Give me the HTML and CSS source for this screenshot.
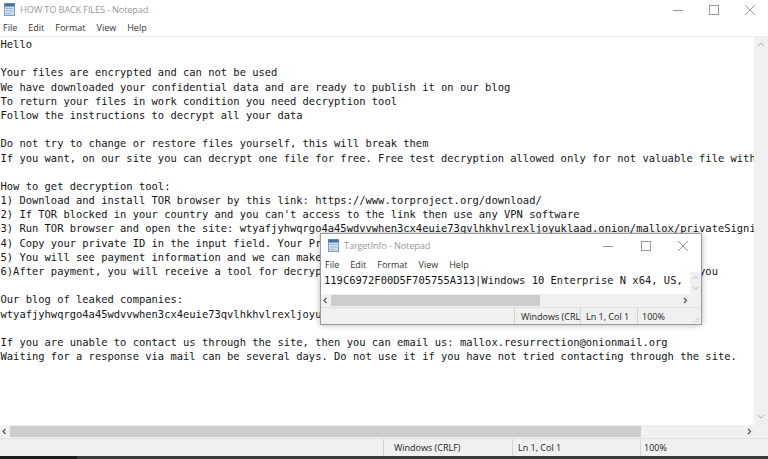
FILE: index.html
```html
<!DOCTYPE html>
<html lang="en">
<head>
  <meta charset="UTF-8" />
  <title>HOW TO BACK FILES - Notepad</title>
  <link rel="stylesheet" href="styles.css">
</head>
<body>
  <div class="desktop">
    <div class="window main">
      <div class="titlebar">
        <svg class="app-icon" width="11" height="13" viewBox="0 0 11 13">
          <rect x="0.5" y="0.5" width="10" height="12" fill="#c9def0" stroke="#7d9fc2" />
          <rect x="0.5" y="0.5" width="10" height="3" fill="#41719f" />
          <rect x="2" y="5" width="7" height="1" fill="#9cb8d4" />
          <rect x="2" y="7.5" width="7" height="1" fill="#9cb8d4" />
          <rect x="2" y="10" width="5" height="1" fill="#9cb8d4" />
        </svg>
        <span class="title">HOW TO BACK FILES - Notepad</span>
        <div class="controls">
          <svg width="36" height="20" viewBox="0 0 36 20"><path d="M13 10.5h10" stroke="#999" /></svg>
          <svg width="36" height="20" viewBox="0 0 36 20"><rect x="13.5" y="5.5" width="9" height="9" fill="none" stroke="#999" /></svg>
          <svg width="36" height="20" viewBox="0 0 36 20"><path d="M13 5l10 10M23 5L13 15" stroke="#999" /></svg>
        </div>
      </div>
      <div class="menubar">
        <span>File</span><span>Edit</span><span>Format</span><span>View</span><span>Help</span>
      </div>
      <div class="editor">
        <pre class="text">Hello

Your files are encrypted and can not be used
We have downloaded your confidential data and are ready to publish it on our blog
To return your files in work condition you need decryption tool
Follow the instructions to decrypt all your data

Do not try to change or restore files yourself, this will break them
If you want, on our site you can decrypt one file for free. Free test decryption allowed only for not valuable file with size less than 3MB

How to get decryption tool:
1) Download and install TOR browser by this link: https://www.torproject.org/download/
2) If TOR blocked in your country and you can't access to the link then use any VPN software
3) Run TOR browser and open the site: wtyafjyhwqrgo4a45wdvvwhen3cx4euie73qvlhkhvlrexljoyuklaad.onion/mallox/privateSignin
4) Copy your private ID in the input field. Your Private ID: 119C6972F00D5F705755A313
5) You will see payment information and we can make free test decryption here
6)After payment, you will receive a tool for decryption of all your files, also we will delete all leaked data you

Our blog of leaked companies:
wtyafjyhwqrgo4a45wdvvwhen3cx4euie73qvlhkhvlrexljoyuklaad.onion/mallox/

If you are unable to contact us through the site, then you can email us: mallox.resurrection@onionmail.org
Waiting for a response via mail can be several days. Do not use it if you have not tried contacting through the site.</pre>
        <div class="vscroll">
          <svg width="14" height="14" viewBox="0 0 14 14"><path d="M4 8l3-3 3 3" fill="none" stroke="#b0b0b0" /></svg>
          <svg width="14" height="14" viewBox="0 0 14 14"><path d="M4 6l3 3 3-3" fill="none" stroke="#b0b0b0" /></svg>
        </div>
      </div>
      <div class="hscroll">
        <svg class="arrow" width="10" height="13" viewBox="0 0 10 13"><path d="M5.5 4l-2.5 2.5 2.5 2.5" fill="none" stroke="#555" stroke-width="1.2" /></svg>
        <div class="track"><div class="thumb"></div></div>
        <svg class="arrow" width="10" height="13" viewBox="0 0 10 13"><path d="M4 4l2.5 2.5-2.5 2.5" fill="none" stroke="#555" stroke-width="1.2" /></svg>
        <div class="corner"></div>
      </div>
      <div class="statusbar">
        <div class="cell spacer"></div>
        <div class="cell eol">Windows (CRLF)</div>
        <div class="cell pos">Ln 1, Col 1</div>
        <div class="cell zoom">100%</div>
      </div>
    </div>
    <div class="taskbar-edge"></div>

    <div class="window small">
      <div class="titlebar">
        <svg class="app-icon" width="11" height="13" viewBox="0 0 11 13">
          <rect x="0.5" y="0.5" width="10" height="12" fill="#c9def0" stroke="#7d9fc2" />
          <rect x="0.5" y="0.5" width="10" height="3" fill="#41719f" />
          <rect x="2" y="5" width="7" height="1" fill="#9cb8d4" />
          <rect x="2" y="7.5" width="7" height="1" fill="#9cb8d4" />
          <rect x="2" y="10" width="5" height="1" fill="#9cb8d4" />
        </svg>
        <span class="title">TargetInfo - Notepad</span>
        <div class="controls">
          <svg width="37" height="23" viewBox="0 0 37 23"><path d="M13 12.5h10" stroke="#999" /></svg>
          <svg width="37" height="23" viewBox="0 0 37 23"><rect x="14.5" y="7.5" width="9" height="9" fill="none" stroke="#999" /></svg>
          <svg width="37" height="23" viewBox="0 0 37 23"><path d="M14 7l10 10M24 7L14 17" stroke="#999" /></svg>
        </div>
      </div>
      <div class="menubar">
        <span>File</span><span>Edit</span><span>Format</span><span>View</span><span>Help</span>
      </div>
      <div class="editor">
        <pre class="text">119C6972F00D5F705755A313|Windows 10 Enterprise N x64, US,</pre>
        <div class="vscroll">
          <svg width="11" height="11" viewBox="0 0 11 11"><path d="M3 6.5l2.5-2.5 2.5 2.5" fill="none" stroke="#b0b0b0" /></svg>
          <svg width="11" height="11" viewBox="0 0 11 11"><path d="M3 4.5l2.5 2.5 2.5-2.5" fill="none" stroke="#b0b0b0" /></svg>
        </div>
      </div>
      <div class="hscroll">
        <svg class="arrow" width="10" height="13" viewBox="0 0 10 13"><path d="M5.5 4l-2.5 2.5 2.5 2.5" fill="none" stroke="#555" stroke-width="1.2" /></svg>
        <div class="track"><div class="thumb"></div></div>
        <svg class="arrow" width="10" height="13" viewBox="0 0 10 13"><path d="M4 4l2.5 2.5-2.5 2.5" fill="none" stroke="#555" stroke-width="1.2" /></svg>
        <div class="corner"></div>
      </div>
      <div class="statusbar">
        <div class="cell spacer"></div>
        <div class="cell eol">Windows (CRLF)</div>
        <div class="cell pos">Ln 1, Col 1</div>
        <div class="cell zoom">100%</div>
        <svg class="grip" width="8" height="8" viewBox="0 0 8 8"><path d="M6 2h1v1h-1zM4 4h1v1h-1zM6 4h1v1h-1zM2 6h1v1h-1zM4 6h1v1h-1zM6 6h1v1h-1z" fill="#bbb" /></svg>
      </div>
    </div>
  </div>
</body>
</html>
```

FILE: styles.css
```css
body {
  margin: 0;
  padding: 0;
  background: #fff;
  font-family: "Open Sans", "Noto Sans", sans-serif;
  overflow: hidden;
}

.desktop {
  position: relative;
  width: 768px;
  height: 459px;
  overflow: hidden;
}

.window {
  display: flex;
  flex-direction: column;
  background: #fff;
}

.main {
  width: 768px;
  height: 456px;
}

/* title bar */
.titlebar {
  display: flex;
  align-items: center;
  height: 19px;
  padding-left: 4px;
  color: #9a9a9a;
  font-size: 9.3px;
  letter-spacing: -0.2px;
}

.app-icon {
  flex: none;
  margin-right: 5px;
}

.title {
  flex: 1;
  white-space: nowrap;
}

.controls {
  display: flex;
}

.controls svg {
  display: block;
}

/* menu */
.menubar {
  display: flex;
  gap: 11px;
  height: 17px;
  align-items: center;
  padding-left: 3px;
  font-size: 9px;
  color: #333;
  border-bottom: 1px solid #ececec;
}

/* editor */
.editor {
  flex: 1;
  display: flex;
  min-height: 0;
}

.text {
  flex: 1;
  margin: 0;
  padding: 0 0 0 0.5px;
  overflow: hidden;
  font-family: "DejaVu Sans Mono", "Liberation Mono", monospace;
  font-size: 10.46px;
  line-height: 14.18px;
  color: #141414;
  white-space: pre;
}

.vscroll {
  flex: none;
  width: 14px;
  background: #f0f0f0;
  display: flex;
  flex-direction: column;
  justify-content: space-between;
  padding: 1px 0 2px;
}

.vscroll svg {
  display: block;
}

/* horizontal scrollbar */
.hscroll {
  display: flex;
  height: 13px;
  background: #f0f0f0;
}

.hscroll .arrow {
  flex: none;
  display: block;
}

.hscroll .track {
  flex: 1;
  display: flex;
  align-items: center;
}

.hscroll .thumb {
  width: 86%;
  height: 11px;
  background: #cdcdcd;
}

.hscroll .corner {
  width: 14px;
  background: #f0f0f0;
}

/* status bar */
.statusbar {
  display: flex;
  height: 17px;
  background: #f0f0f0;
  border-top: 1px solid #e2e2e2;
  font-size: 9px;
  color: #222;
  align-items: stretch;
}

.cell {
  display: flex;
  align-items: center;
  white-space: nowrap;
  overflow: hidden;
  border-left: 1px solid #d4d4d4;
}

.spacer {
  width: 383px;
  border-left: none;
}

.main .eol {
  width: 118px;
  padding-left: 10px;
}

.main .pos {
  width: 122px;
  padding-left: 5px;
}

.main .zoom {
  flex: 1;
  padding-left: 3px;
}

.taskbar-edge {
  height: 3px;
  background: linear-gradient(to right, #1c1c1c 0, #1c1c1c 77px, #3a3a3a 77px);
}

/* the second notepad window floating over the first */
.small {
  position: absolute;
  left: 320px;
  top: 233px;
  width: 380px;
  height: 90px;
  border: 1px solid #9a9a9a;
  box-shadow: 0 0 6px rgba(0, 0, 0, 0.3);
}

.small .titlebar {
  height: 23px;
  padding-left: 7px;
}

.small .menubar {
  height: 15px;
  padding-left: 4px;
  border-bottom: none;
}

.small .text {
  padding-left: 3px;
  line-height: 16px;
  padding-top: 0;
}

.small .vscroll {
  width: 11px;
  padding: 1px 0;
}

.small .hscroll .track .thumb {
  width: 60%;
}

.small .hscroll .corner {
  width: 11px;
}

.small .statusbar {
  height: 16px;
  position: relative;
}

.small .spacer {
  width: 193px;
}

.small .eol {
  width: 59px;
  padding-left: 6px;
}

.small .pos {
  width: 51px;
  padding-left: 5px;
}

.small .zoom {
  flex: 1;
  padding-left: 4px;
}

.grip {
  position: absolute;
  right: 1px;
  bottom: 1px;
}
```
